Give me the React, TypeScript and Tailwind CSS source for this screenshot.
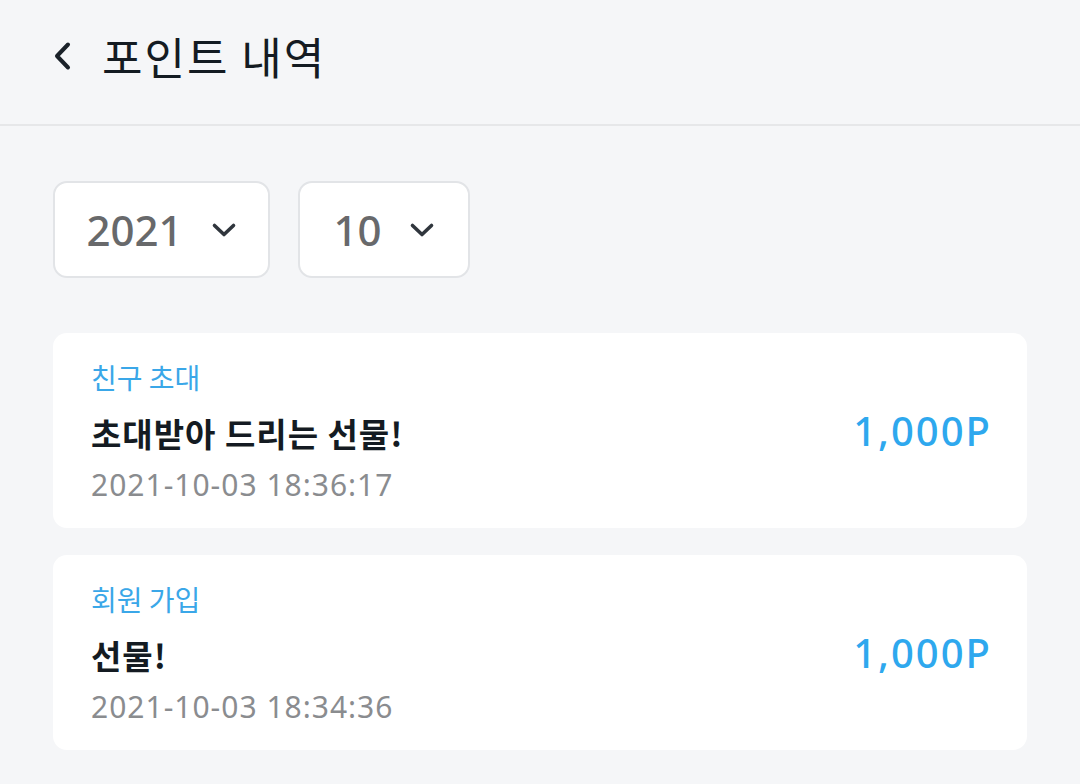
import React from "react";

const cjk = { fontFamily: '"Noto Sans CJK KR", "Noto Sans", sans-serif' };
const latin = { fontFamily: '"Noto Sans", "Noto Sans CJK KR", sans-serif' };

function Chevron() {
  return (
    <svg viewBox="0 0 26 16" className="h-[16px] w-[26px] text-[#30363d]" fill="none" stroke="currentColor" strokeWidth={3.6} strokeLinecap="round" strokeLinejoin="round">
      <path d="M3.5 3.5L13 12.5L22.5 3.5" />
    </svg>
  );
}

function Select({ value, width, gap }: { value: string; width: string; gap: string }) {
  return (
    <div className={`flex h-[97px] items-center justify-center rounded-[14px] border-2 border-[#e2e4e7] bg-white ${width} ${gap}`}>
      <span style={latin} className="text-[42px] font-medium leading-none text-[#68696b]">{value}</span>
      <Chevron />
    </div>
  );
}

function Item({ cat, title, date }: { cat: string; title: string; date: string }) {
  return (
    <div className="flex h-[195px] items-center justify-between rounded-[14px] bg-white pl-[38px] pr-[37px]">
      <div className="flex flex-col">
        <span className="text-[28px] leading-[40px] text-[#3aa7e8]">{cat}</span>
        <span className="mt-[14px] text-[33px] font-bold leading-[44px] tracking-[1px] text-[#141b22]">{title}</span>
        <span style={latin} className="mt-[10px] text-[30px] leading-[40px] tracking-[1px] text-[#8a8c8f]">{date}</span>
      </div>
      <span style={latin} className="mr-[-2px] text-[40px] font-medium leading-none tracking-[2px] text-[#2ea8ee]">1,000P</span>
    </div>
  );
}

export default function App() {
  return (
    <div style={cjk} className="h-[784px] w-[1080px] overflow-hidden bg-[#f5f6f8]">
      <header className="flex h-[126px] items-center border-b-2 border-[#e6e7e9] pb-[12px] pl-[52px]">
        <svg viewBox="0 0 20 30" className="h-[30px] w-[20px] text-[#1a2129]" fill="none" stroke="currentColor" strokeWidth={4} strokeLinecap="round" strokeLinejoin="round">
          <path d="M16 3.5L5 15L16 26.5" />
        </svg>
        <h1 className="ml-[30px] text-[44px] font-normal leading-none tracking-[2px] text-[#141b22]">포인트 내역</h1>
      </header>
      <main className="px-[53px] pt-[55px]">
        <div className="flex gap-[28px]">
          <Select value="2021" width="w-[217px]" gap="gap-[28px]" />
          <Select value="10" width="w-[172px]" gap="gap-[27px]" />
        </div>
        <div className="mt-[55px] flex flex-col gap-[27px]">
          <Item cat="친구 초대" title="초대받아 드리는 선물!" date="2021-10-03 18:36:17" />
          <Item cat="회원 가입" title="선물!" date="2021-10-03 18:34:36" />
        </div>
      </main>
    </div>
  );
}
